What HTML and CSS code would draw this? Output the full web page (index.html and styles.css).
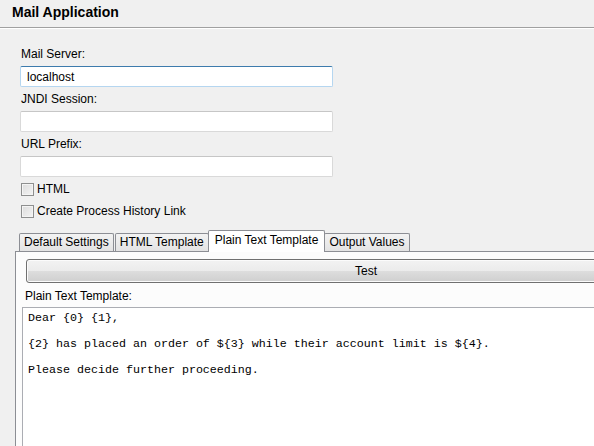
FILE: index.html
```html
<!DOCTYPE html>
<html>
<head>
<meta charset="utf-8">
<link rel="stylesheet" href="styles.css">
</head>
<body>
<div class="page">
  <header class="header">
    <h1 class="title">Mail Application</h1>
  </header>
  <section class="form">
    <label class="field-label">Mail Server:</label>
    <div class="input input-focus">localhost</div>
    <label class="field-label">JNDI Session:</label>
    <div class="input"></div>
    <label class="field-label">URL Prefix:</label>
    <div class="input"></div>
    <div class="check-row first"><span class="checkbox"></span><span>HTML</span></div>
    <div class="check-row"><span class="checkbox"></span><span>Create Process History Link</span></div>
  </section>
  <section class="tabfolder">
    <div class="tabs">
      <div class="tab">Default Settings</div>
      <div class="tab">HTML Template</div>
      <div class="tab tab-active">Plain Text Template</div>
      <div class="tab">Output Values</div>
    </div>
    <div class="panel">
      <button class="button">Test</button>
      <div class="panel-label">Plain Text Template:</div>
      <div class="textarea">Dear {0} {1},

{2} has placed an order of ${3} while their account limit is ${4}.

Please decide further proceeding.</div>
    </div>
  </section>
</div>
</body>
</html>
```
FILE: styles.css
```css
html, body {
  margin: 0;
  padding: 0;
  background: #f0f0f0;
  overflow: hidden;
  height: 446px;
}
body {
  font-family: "Liberation Sans", Arial, sans-serif;
  font-size: 12px;
  color: #000;
}
.page {
  width: 640px;
  height: 446px;
  display: flex;
  flex-direction: column;
}
.header {
  height: 27px;
  border-bottom: 1px solid #a0a0a0;
  box-shadow: 0 1px 0 #ffffff;
  display: flex;
  align-items: center;
  padding-left: 12px;
}
.title {
  margin: 0;
  font-size: 14px;
  font-weight: bold;
  line-height: 16px;
  margin-top: -4px;
}
.form {
  padding: 14px 0 0 20px;
  width: 313px;
  display: flex;
  flex-direction: column;
}
.field-label {
  display: block;
  line-height: 16px;
  margin: 4px 0 4px 1px;
}
.input {
  box-sizing: border-box;
  height: 21px;
  background: #fff;
  border: 1px solid #d9d9d9;
  border-top-color: #c6c6c6;
  border-radius: 2px;
  padding: 3px 0 0 6px;
  line-height: 14px;
}
.input-focus {
  border-color: #b5d6f0;
  border-top-color: #3d7bad;
}
.check-row {
  display: flex;
  align-items: center;
  height: 16px;
  margin-top: 6px;
  margin-left: 1px;
  gap: 3px;
}
.check-row.first { margin-top: 4px; }
.checkbox {
  box-sizing: border-box;
  width: 13px;
  height: 13px;
  border: 1px solid #8e8f8f;
  background: linear-gradient(135deg, #dcdcdc 0%, #f4f4f4 100%);
  box-shadow: inset 0 0 0 1px #f4f4f4;
}
.tabfolder {
  margin-top: 11px;
  margin-left: 15px;
  flex: 1;
  display: flex;
  flex-direction: column;
}
.tabs {
  display: flex;
  align-items: flex-end;
  height: 21px;
  padding-left: 4px;
  position: relative;
  z-index: 1;
}
.tab {
  box-sizing: border-box;
  height: 18px;
  line-height: 17px;
  padding: 0 4px;
  border: 1px solid #8c8e94;
  border-bottom: none;
  border-radius: 2px 2px 0 0;
  background: linear-gradient(#f3f3f3, #e3e3e3);
  margin-right: 1px;
  white-space: nowrap;
}
.tab-active {
  height: 22px;
  margin: 0 -1px -1px -2px;
  padding: 0 6px;
  line-height: 18px;
  background: #fff;
  position: relative;
}
.panel {
  flex: 1;
  border-top: 1px solid #8c8e94;
  border-left: 1px solid #8c8e94;
  background: #fcfcfc;
  padding: 7px 0 0 6px;
  display: flex;
  flex-direction: column;
}
.button {
  box-sizing: border-box;
  margin-left: 4px;
  height: 24px;
  font: inherit;
  color: #000;
  border: 1px solid #707070;
  border-radius: 3px;
  background: linear-gradient(#f2f2f2 0%, #ebebeb 50%, #dddddd 51%, #cfcfcf 100%);
  box-shadow: inset 0 0 0 1px #fbfbfb;
  padding: 0;
  text-align: left;
  text-indent: 328px;
}
.panel-label {
  line-height: 16px;
  margin: 5px 0 3px 3px;
}
.textarea {
  flex: 1;
  background: #fff;
  border: 1px solid #abadb3;
  border-right: none;
  border-bottom: none;
  padding: 4px 0 0 5px;
  font-family: "Liberation Mono", "Courier New", monospace;
  font-size: 11.66px;
  line-height: 13px;
  white-space: pre;
}
```
